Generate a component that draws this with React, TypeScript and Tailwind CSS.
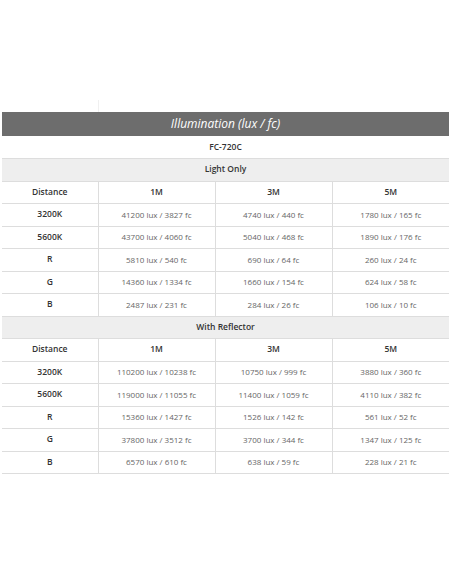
import React from 'react';

type Row = { label: string; values: string[] };

const lightOnly: Row[] = [
  { label: '3200K', values: ['41200 lux / 3827 fc', '4740 lux / 440 fc', '1780 lux / 165 fc'] },
  { label: '5600K', values: ['43700 lux / 4060 fc', '5040 lux / 468 fc', '1890 lux / 176 fc'] },
  { label: 'R', values: ['5810 lux / 540 fc', '690 lux / 64 fc', '260 lux / 24 fc'] },
  { label: 'G', values: ['14360 lux / 1334 fc', '1660 lux / 154 fc', '624 lux / 58 fc'] },
  { label: 'B', values: ['2487 lux / 231 fc', '284 lux / 26 fc', '106 lux / 10 fc'] },
];

const withReflector: Row[] = [
  { label: '3200K', values: ['110200 lux / 10238 fc', '10750 lux / 999 fc', '3880 lux / 360 fc'] },
  { label: '5600K', values: ['119000 lux / 11055 fc', '11400 lux / 1059 fc', '4110 lux / 382 fc'] },
  { label: 'R', values: ['15360 lux / 1427 fc', '1526 lux / 142 fc', '561 lux / 52 fc'] },
  { label: 'G', values: ['37800 lux / 3512 fc', '3700 lux / 344 fc', '1347 lux / 125 fc'] },
  { label: 'B', values: ['6570 lux / 610 fc', '638 lux / 59 fc', '228 lux / 21 fc'] },
];

const cell = 'border-b border-[#dddddd] text-center align-middle p-0 h-[22.5px]';
const sideBorder = 'border-l border-[#dddddd]';
const head = 'font-semibold text-[#333333] text-[8.5px]';
const data = 'text-[#666666] text-[8px]';

function Section({ title, rows }: { title: string; rows: Row[] }) {
  return (
    <>
      <tr>
        <td colSpan={4} className={`${cell} ${head} bg-[#eeeeee]`}>
          {title}
        </td>
      </tr>
      <tr className={head}>
        <td className={cell}>Distance</td>
        <td className={`${cell} ${sideBorder}`}>1M</td>
        <td className={`${cell} ${sideBorder}`}>3M</td>
        <td className={`${cell} ${sideBorder}`}>5M</td>
      </tr>
      {rows.map((r) => (
        <tr key={r.label}>
          <td className={`${cell} ${head}`}>{r.label}</td>
          {r.values.map((v, i) => (
            <td key={i} className={`${cell} ${sideBorder} ${data}`}>
              {v}
            </td>
          ))}
        </tr>
      ))}
    </>
  );
}

export default function App() {
  return (
    <div className="w-[452px] h-[584px] bg-white font-['Open_Sans',sans-serif]">
      <div className="h-[112px] flex">
        <div className="w-[98px]" />
        <div className="mt-[100px] w-px h-[12px] bg-[#f0f0f0]" />
      </div>
      <table className="ml-[2px] w-[447px] border-collapse table-fixed">
        <colgroup>
          <col className="w-[96px]" />
          <col className="w-[117px]" />
          <col className="w-[117px]" />
          <col className="w-[117px]" />
        </colgroup>
        <tbody>
          <tr>
            <td colSpan={4} className="h-[24px] p-0 bg-[#6d6d6d] text-white italic text-[12px] text-center align-middle">
              Illumination (lux / fc)
            </td>
          </tr>
          <tr>
            <td colSpan={4} className={`${cell} ${head}`}>
              FC-720C
            </td>
          </tr>
          <Section title="Light Only" rows={lightOnly} />
          <Section title="With Reflector" rows={withReflector} />
        </tbody>
      </table>
    </div>
  );
}
